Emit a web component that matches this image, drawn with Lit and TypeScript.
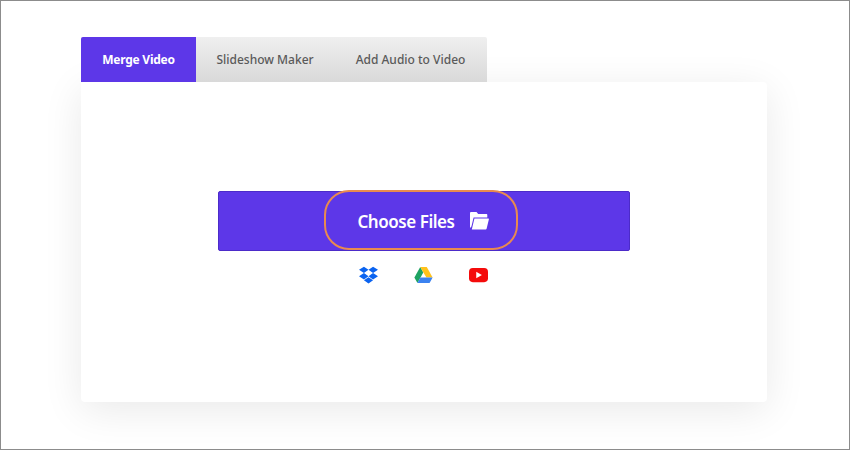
import { LitElement, html, css } from "lit";
import { customElement } from "lit/decorators.js";

@customElement("app-root")
export class AppRoot extends LitElement {
  static styles = css`
    :host { display: block; width: 850px; height: 450px; font-family: "Noto Sans", "Open Sans", sans-serif; }
    .frame { box-sizing: border-box; width: 850px; height: 450px; border: 1px solid #8c8c8c; background: #fff; padding: 36px 82px 0 80px; display: flex; flex-direction: column; overflow: hidden; }
    .tabs { display: flex; align-self: flex-start; height: 45px; width: 406px; border-radius: 2px 2px 0 0; background: linear-gradient(#efefef, #d9d9d9); position: relative; z-index: 1; }
    .tab { display: flex; align-items: center; justify-content: center; font-size: 12px; font-weight: 500; color: #5a5a5a; }
    .tab.active { width: 115px; background: #5d37e8; color: #fff; font-weight: 700; border-radius: 2px 0 0 0; letter-spacing: -0.25px; }
    .tab.b { width: 138px; }
    .tab.c { width: 153px; }
    .card { height: 320px; background: #fff; border-radius: 0 4px 4px 4px; box-shadow: 0 8px 40px rgba(0,0,0,.09); display: flex; flex-direction: column; align-items: center; padding-top: 109px; box-sizing: border-box; }
    .btn { position: relative; width: 412px; height: 60px; box-sizing: border-box; background: #5d37e8; border: 1px solid #4c2bc9; border-radius: 2px; padding-right: 2px; display: flex; align-items: center; justify-content: center; gap: 15px; color: #fff; font-size: 17px; font-weight: 600; letter-spacing: -0.45px; }
    .ring { position: absolute; left: 105px; top: -2px; width: 194px; height: 60px; box-sizing: border-box; border: 2px solid #e98a4f; border-radius: 25px; }
    .folder { width: 20px; height: 20px; display: block; margin-left: -1px; }
    .clouds { display: flex; gap: 36px; margin-top: 14px; align-items: center; height: 20px; margin-left: -1px; }
    .clouds svg { display: block; width: 19px; height: 18px; }
  `;
  render() {
    return html`<div class="frame">
      <div class="tabs">
        <div class="tab active">Merge Video</div>
        <div class="tab b">Slideshow Maker</div>
        <div class="tab c">Add Audio to Video</div>
      </div>
      <div class="card">
        <div class="btn">
          <span class="ring"></span>
          <span>Choose Files</span>
          <svg class="folder" viewBox="0 0 20 20"><path fill="#fff" d="M1 2.200C1 1.500 1.500 1 2.200 1h5.300l1.700 2h8.100c.6 0 1 .4 1 1V6.400H4.600L2.400 15.500 1 17z"/><path fill="#fff" d="M5.400 7.600H19.400c.4 0 .6.300.5.700l-2.300 9.400c-.1.500-.5.800-1 .8H2.800z"/></svg>
        </div>
        <div class="clouds">
          <svg viewBox="0 0 20 18"><path fill="#0a63f0" d="M5.200 0.200 0 3.600l5.200 3.400L10 3.600zM14.800 0.200 10 3.600l4.800 3.400L20 3.600zM0 10.300 5.200 13.700 10 10.300 5.200 7zM14.800 7 10 10.300l4.800 3.400 5.200-3.400zM5.200 14.600l4.800 3.300 4.800-3.300L10 11.400z"/></svg>
          <svg viewBox="0 0 20 18"><path fill="#1ea362" d="M6.600.6.400 11.600l3.200 5.800 6.200-11z"/><path fill="#ffc21c" d="M6.600.6h6.800l6.200 11h-6.600z"/><path fill="#3b82f0" d="M6.800 11.600h12.800l-3.200 5.800H3.600z"/></svg>
          <svg viewBox="0 0 20 18"><rect x="0" y="1.500" width="20" height="15" rx="4" fill="#f40b0b"/><path fill="#fff" d="M7.600 5.600 13.600 9 7.600 12.400z"/></svg>
        </div>
      </div>
    </div>`;
  }
}
